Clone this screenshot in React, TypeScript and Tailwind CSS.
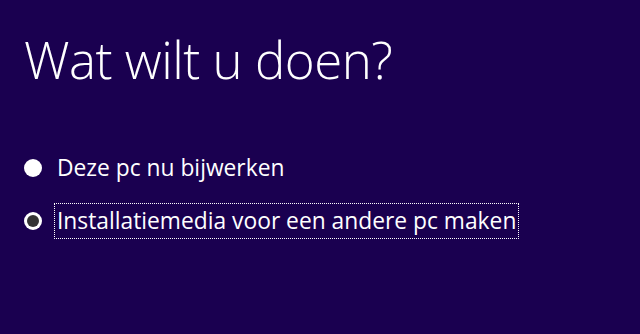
import React from "react";

const options = [
  { label: "Deze pc nu bijwerken", checked: false, focused: false },
  { label: "Installatiemedia voor een andere pc maken", checked: true, focused: true },
];

function Radio({ checked }: { checked: boolean }) {
  return (
    <span className="flex h-[18px] w-[18px] shrink-0 items-center justify-center rounded-full bg-white">
      {checked && <span className="h-[12px] w-[12px] rounded-full bg-[#333333]" />}
    </span>
  );
}

export default function App() {
  return (
    <div
      className="h-[334px] w-[640px] overflow-hidden bg-[#1a0050] px-[24px] pt-[29px] text-white"
      style={{ fontFamily: '"Open Sans", "Noto Sans", sans-serif' }}
    >
      <h1 className="text-[51px] font-light leading-[60px] tracking-[-0.5px]">Wat wilt u doen?</h1>
      <div className="mt-[61px] flex flex-col gap-[17px]">
        {options.map((o) => (
          <div key={o.label} className="flex items-center">
            <Radio checked={o.checked} />
            <span
              className={
                "ml-[12px] px-[2px] py-[4px] text-[22.8px] leading-[26px] " +
                (o.focused ? "border border-dotted border-white" : "border border-transparent")
              }
            >
              {o.label}
            </span>
          </div>
        ))}
      </div>
    </div>
  );
}
